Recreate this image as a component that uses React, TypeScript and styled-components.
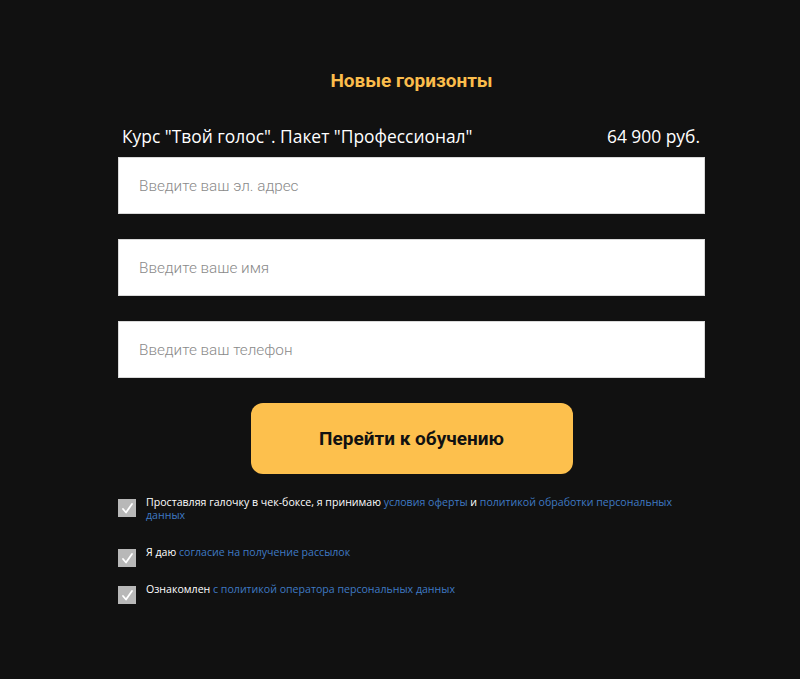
import styled, { createGlobalStyle } from 'styled-components'

const GlobalStyle = createGlobalStyle`
  html, body {
    margin: 0;
    padding: 0;
    background: #111111;
  }
  body {
    font-family: 'Open Sans', 'Noto Sans', sans-serif;
  }
`

const Page = styled.main`
  min-height: 679px;
  display: flex;
  justify-content: center;
  padding: 69px 0 0 23px;
  box-sizing: border-box;
`

const Form = styled.form`
  width: 587px;
  display: flex;
  flex-direction: column;
`

const Title = styled.h2`
  margin: 0;
  text-align: center;
  font-family: Roboto, sans-serif;
  font-weight: 700;
  font-size: 19px;
  line-height: 24px;
  color: #fbbd4c;
`

const ProductRow = styled.div`
  display: flex;
  justify-content: space-between;
  align-items: baseline;
  margin-top: 31px;
  padding: 0 5px 0 4px;
  color: #ffffff;
  font-size: 17.4px;
  line-height: 24px;
`

const Fields = styled.div`
  display: flex;
  flex-direction: column;
  gap: 25px;
  margin-top: 9px;
`

const Input = styled.input`
  box-sizing: border-box;
  width: 100%;
  height: 57px;
  padding: 0 20px;
  border: 1px solid #d9d9d9;
  background: #ffffff;
  font-family: Roboto, sans-serif;
  font-size: 15.3px;
  color: #333;
  outline: none;

  &::placeholder {
    color: #8a8a8a;
    font-weight: 300;
  }
`

const SubmitButton = styled.button`
  align-self: center;
  width: 322px;
  height: 71px;
  margin-top: 25px;
  border: none;
  border-radius: 12px;
  background: #fdc04d;
  color: #111111;
  font-family: Roboto, sans-serif;
  font-weight: 700;
  font-size: 19px;
  cursor: pointer;
`

const Agreements = styled.div`
  display: flex;
  flex-direction: column;
  margin-top: 22px;
`

const Agreement = styled.label<{ $gap: number }>`
  display: flex;
  align-items: flex-start;
  gap: 10px;
  margin-top: ${({ $gap }) => $gap}px;
  font-size: 10.6px;
  line-height: 13px;
  color: #ffffff;
`

const Box = styled.span`
  flex: none;
  width: 18px;
  height: 18px;
  margin-top: 3px;
  background: #b8b8b8;
  display: flex;
  align-items: center;
  justify-content: center;
`

const AgreementText = styled.span`
  flex: 1;
  padding-right: 15px;
`

const Link = styled.a`
  color: #3f7ac4;
  text-decoration: none;
`

const Check = () => (
  <Box>
    <svg width="13" height="13" viewBox="0 0 13 13">
      <path d="M2 7 L5 10.5 L11 2" fill="none" stroke="#ffffff" strokeWidth="1.8" strokeLinecap="round" strokeLinejoin="round" />
    </svg>
  </Box>
)

const App = () => {
  return (
    <>
      <GlobalStyle />
      <Page>
        <Form onSubmit={(e) => e.preventDefault()}>
          <Title>Новые горизонты</Title>
          <ProductRow>
            <span>Курс "Твой голос". Пакет "Профессионал"</span>
            <span>64 900 руб.</span>
          </ProductRow>
          <Fields>
            <Input type="email" placeholder="Введите ваш эл. адрес" />
            <Input type="text" placeholder="Введите ваше имя" />
            <Input type="tel" placeholder="Введите ваш телефон" />
          </Fields>
          <SubmitButton type="submit">Перейти к обучению</SubmitButton>
          <Agreements>
            <Agreement $gap={0}>
              <Check />
              <AgreementText>
                Проставляя галочку в чек-боксе, я принимаю <Link href="#">условия оферты</Link> и{' '}
                <Link href="#">политикой обработки персональных данных</Link>
              </AgreementText>
            </Agreement>
            <Agreement $gap={24}>
              <Check />
              <AgreementText>
                Я даю <Link href="#">согласие на получение рассылок</Link>
              </AgreementText>
            </Agreement>
            <Agreement $gap={16}>
              <Check />
              <AgreementText>
                Ознакомлен <Link href="#">с политикой оператора персональных данных</Link>
              </AgreementText>
            </Agreement>
          </Agreements>
        </Form>
      </Page>
    </>
  )
}

export default App
